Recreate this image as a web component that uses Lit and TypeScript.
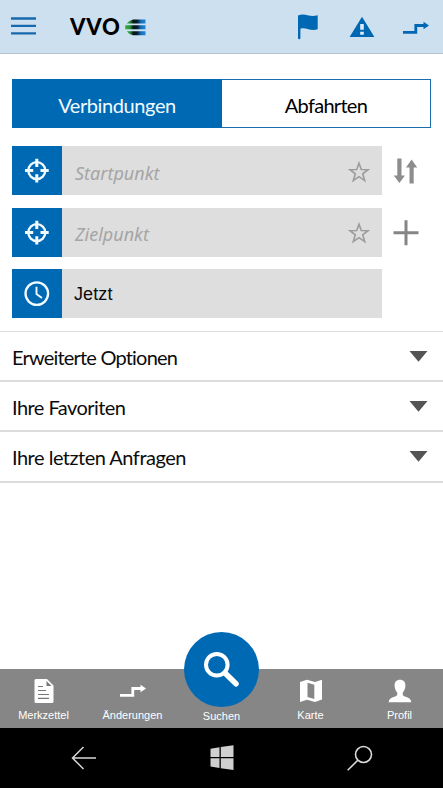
import { LitElement, html, css } from "lit";
import { customElement } from "lit/decorators.js";

const target = () => html`<svg width="49" height="49" viewBox="0 0 49 49" fill="none" stroke="#f2fbff">
  <circle cx="24.8" cy="24.6" r="8.5" stroke-width="2.3"/>
  <path d="M24.8 12.800v8.200M24.8 28.300v8.200M13 24.600h8.200M28.500 24.600h8.200" stroke-width="3"/></svg>`;
const star = () => html`<svg class="star" width="22" height="22" viewBox="0 0 22 22" fill="none" stroke="#9c9c9c" stroke-width="1.600">
  <path d="M11 2.200l2.300 6.300 6.800.2-5.400 4.100 2 6.800-5.700-3.900-5.700 3.900 2-6.800-5.400-4.100 6.800-.2z"/></svg>`;
const step = (color: string) => html`<svg width="28" height="16" viewBox="0 0 28 16">
  <path d="M1 12.300h12.800V5.500h9" fill="none" stroke=${color} stroke-width="2.800"/>
  <path d="M21.500 1.800l5.500 3.700-5.500 3.700z" fill=${color}/></svg>`;

const sections = [
  { title: "Erweiterte Optionen", tracking: "t1" },
  { title: "Ihre Favoriten", tracking: "t2" },
  { title: "Ihre letzten Anfragen", tracking: "t3" },
];

@customElement("app-root")
export class AppRoot extends LitElement {
  static styles = css`
    :host { display: flex; flex-direction: column; width: 443px; height: 788px; overflow: hidden; background: #fff; color: #0c0c0c; font-family: "Lato", sans-serif; font-variant-ligatures: none; }
    * { box-sizing: border-box; }
    svg { display: block; flex: none; }
    header { height: 54px; flex: none; display: flex; align-items: flex-start; background: #cce0ef; border-bottom: 1px solid #b3c4d0; }
    .menu { margin: 13px 0 0 11px; }
    .brand { margin: 14px 0 0 34px; width: 55px; font-size: 22px; line-height: 26px; font-weight: 900; color: #000; letter-spacing: .8px; }
    .mark { margin-top: 19px; }
    .flag { margin: 14px 0 0 151px; }
    .warn { margin: 16px 0 0 30px; }
    .change { margin: 20px 0 0 27px; }
    .tabs { margin: 25px 12px 18px; height: 49px; flex: none; display: flex; border: 1px solid #1a6eae; font-size: 20px; }
    .tab { flex: 1; display: flex; align-items: center; justify-content: center; padding-top: 2px; white-space: nowrap; color: #000; letter-spacing: -.7px; }
    .tab.on { flex: none; width: 210px; background: #0069b4; margin: -1px 0 -1px -1px; color: #f2fbff; letter-spacing: -.4px; }
    .fields { flex: none; display: flex; flex-direction: column; gap: 12.5px; padding-left: 12px; }
    .row { height: 49px; display: flex; }
    .badge { width: 49.500px; background: #0069b4; }
    .input { width: 320px; display: flex; align-items: center; background: #dedede; padding-left: 13.500px; font: italic 18px "Noto Sans", sans-serif; color: #a5a5a5; padding-top: 4px; }
    .star { margin: 0 12px 0 auto; position: relative; top: -1px; }
    .now { font: 18px "Liberation Sans", sans-serif; color: #0c0c0c; padding-left: 12.500px; padding-top: 2px; letter-spacing: .1px; }
    .side { margin: 12px 0 0 10px; }
    .sections { margin-top: 13px; border-top: 1px solid #dedede; }
    .section { height: 50.200px; display: flex; align-items: center; justify-content: space-between; padding: 2px 15px 0 12px; border-bottom: 2px solid #dcdcdc; font-size: 20px; }
    .section svg { margin-top: -1px; }
    .t1 { letter-spacing: -.8px; }
    .t2 { letter-spacing: -.55px; }
    .t3 { letter-spacing: -.5px; }
    .nav { margin-top: auto; height: 59px; flex: none; display: grid; grid-template-columns: repeat(5, 89px); justify-content: center; background: #868686; color: #fff; font: 11px "Liberation Sans", sans-serif; }
    .item { display: flex; flex-direction: column; align-items: center; padding-top: 7px; }
    .glyph { height: 30px; display: flex; align-items: center; }
    .label { line-height: 15px; margin-top: 2px; white-space: nowrap; }
    .search { margin-top: -44px; width: 75px; height: 75px; flex: none; border-radius: 50%; background: #0069b4; }
    .system { height: 60px; flex: none; display: flex; align-items: center; justify-content: space-between; padding: 0 70px; background: #000; }
  `;

  render() {
    return html`
      <header>
        <svg class="menu" width="25" height="27" viewBox="0 0 25 27"><path d="M0 5.500h25M0 12.900h25M0 20.300h25" stroke="#176aae" stroke-width="2.300"/></svg>
        <div class="brand">VVO</div>
        <svg class="mark" width="21" height="17" viewBox="0 0 21 17">
          <defs><linearGradient id="g" gradientUnits="userSpaceOnUse" x1="0" y1="0" x2="21" y2="0"><stop offset="0" stop-color="#3dae3b"/><stop offset=".24" stop-color="#25943c"/><stop offset=".4" stop-color="#08161b"/><stop offset=".58" stop-color="#0b1b2a"/><stop offset=".75" stop-color="#126dbb"/><stop offset="1" stop-color="#2189dc"/></linearGradient></defs>
          <path fill="url(#g)" d="M8 .5H20.500V4.500H1.800Q4 1.300 8 .5zM.4 6.300H20.500V10.300H.4Q-.1 8.300.4 6.300zM1.800 12.200H20.500V16.200H8Q4 15.400 1.800 12.200z"/>
        </svg>
        <svg class="flag" width="22" height="26" viewBox="0 0 22 26"><path fill="#0068b3" d="M1 1.500C4 .3 7 .2 10.500 1.200 14 2.200 17 2.300 20.700 1.200V15.300C17 16.300 14 16 10.500 15 7.500 14.100 5.500 14.200 3.400 14.800V24Q3.400 25.200 2.200 25.200T1 24z"/></svg>
        <svg class="warn" width="26" height="22" viewBox="0 0 26 22"><path fill="#0068b3" d="M13 .7L25.400 21H.6z"/><path fill="#dcecf7" d="M11.200 8h3.600v5.800h-3.600zM11.200 15.800h3.600v3h-3.600z"/></svg>
        <div class="change">${step("#0068b3")}</div>
      </header>
      <div class="tabs"><div class="tab on"><span>Verbindungen</span></div><div class="tab"><span>Abfahrten</span></div></div>
      <div class="fields">
        <div class="row"><div class="badge">${target()}</div><div class="input"><span>Startpunkt</span>${star()}</div>
          <svg class="side" width="26" height="27" viewBox="0 0 26 27" fill="#8d8d8d"><path d="M5.300 .5h4.200v17h3.500L7.400 25 1.800 17.500h3.500zM17.500 25.500h4.200V9.500h3.500L19.600 1.500 14 9.500h3.500z"/></svg></div>
        <div class="row"><div class="badge">${target()}</div><div class="input"><span>Zielpunkt</span>${star()}</div>
          <svg class="side" width="27" height="27" viewBox="0 0 27 27"><path d="M1.500 12.700h25M14 .2v25" stroke="#858585" stroke-width="3"/></svg></div>
        <div class="row"><div class="badge"><svg width="49" height="49" viewBox="0 0 49 49" fill="none" stroke="#f2fbff"><circle cx="24.800" cy="24.600" r="11.300" stroke-width="2.300"/><path d="M24.500 17.800v7.200l5.500 4" stroke-width="1.900"/></svg></div><div class="input now">Jetzt</div></div>
      </div>
      <div class="sections">
        ${sections.map(
          (s) => html`<div class="section"><span class=${s.tracking}>${s.title}</span><svg width="19" height="11" viewBox="0 0 19 11"><path fill="#545454" d="M.5 0h18L9.500 10.700z"/></svg></div>`
        )}
      </div>
      <nav class="nav">
        <div class="item"><div class="glyph"><svg width="20" height="26" viewBox="0 0 20 26"><path fill="#fff" d="M2 1h11l6.500 6.500V23.500a1.500 1.500 0 0 1-1.500 1.500H2A1.500 1.500 0 0 1 .5 23.500v-21A1.500 1.500 0 0 1 2 1z"/><path d="M12.500 3v5h5z" fill="#777"/><path d="M4 8.500h5M4 12.500h8M4 16.500h11M4 20.300h11" stroke="#777" stroke-width="1.200"/></svg></div><span class="label">Merkzettel</span></div>
        <div class="item"><div class="glyph">${step("#fff")}</div><span class="label">Änderungen</span></div>
        <div class="item"><svg class="search" viewBox="0 0 75 75"><circle cx="32.800" cy="32.800" r="10.800" fill="none" stroke="#fff" stroke-width="4"/><path d="M41 41L52 51.800" stroke="#fff" stroke-width="5.500" stroke-linecap="round" fill="none"/></svg><span class="label">Suchen</span></div>
        <div class="item"><div class="glyph"><svg width="24" height="24" viewBox="0 0 24 24"><path fill="#fff" d="M1 3L8 .8 16 3 23 .8V20.600L16 23 8 20.800 1 23z"/><path fill="#868686" d="M8.500 3.800L15.300 5.700V20L8.500 18z"/></svg></div><span class="label">Karte</span></div>
        <div class="item"><div class="glyph"><svg width="24" height="24" viewBox="0 0 24 24"><path fill="#fff" d="M12 .8C15.600.8 17.600 3 17.400 6.800 17.200 10 16.200 12.200 14.800 13.500V16.200C16.500 18 23.300 18.200 23.300 23.300H.7C.7 18.200 7.500 18 9.200 16.200V13.500C7.800 12.200 6.800 10 6.600 6.800 6.400 3 8.400.8 12 .8z"/></svg></div><span class="label">Profil</span></div>
      </nav>
      <div class="system">
        <svg width="28" height="26" viewBox="0 0 28 26" fill="none" stroke="#d6d6d6" stroke-width="1.500"><path d="M26 13H2.500M13.500 2L2.500 13l11 11"/></svg>
        <svg width="26" height="26" viewBox="0 0 26 26" fill="#d0d0d0"><path d="M1.500 3.800L10.500 2.300V12H1.500zM11.800 2.100L24.500.3V12H11.800zM1.500 13.300H10.500V23L1.500 21.500zM11.800 13.300H24.500V25L11.800 23.200z"/></svg>
        <svg width="27" height="27" viewBox="0 0 27 27" fill="none" stroke="#dadada" stroke-width="1.600"><circle cx="17.500" cy="9.500" r="8"/><path d="M11.800 15.200L1.700 25.300"/></svg>
      </div>`;
  }
}
